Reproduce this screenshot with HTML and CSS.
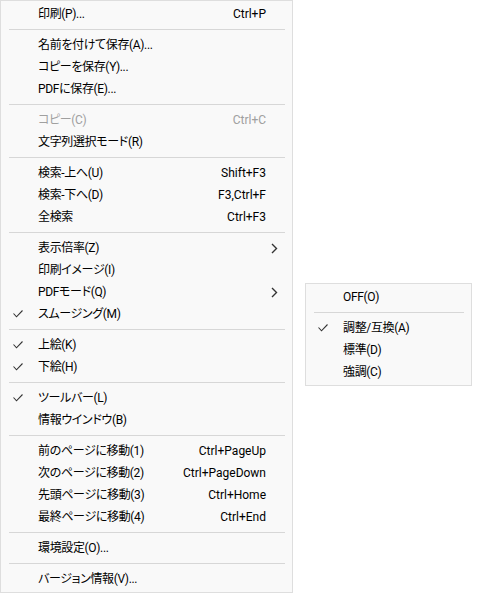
FILE: index.html
```html
<!DOCTYPE html>
<html lang="ja">
<head>
    <meta charset="UTF-8">
    <meta name="viewport" content="width=device-width, initial-scale=1.0">
    <title>メニュー</title>
    <link rel="stylesheet" href="styles.css">
</head>
<body>
    <div class="menu main-menu">
        <div class="item"><span class="check"></span><span class="label">印刷(P)...</span><span class="key">Ctrl+P</span><span class="more"></span></div>
        <div class="sep"></div>
        <div class="item"><span class="check"></span><span class="label">名前を付けて保存(A)...</span><span class="key"></span><span class="more"></span></div>
        <div class="item"><span class="check"></span><span class="label">コピーを保存(Y)...</span><span class="key"></span><span class="more"></span></div>
        <div class="item"><span class="check"></span><span class="label">PDFに保存(E)...</span><span class="key"></span><span class="more"></span></div>
        <div class="sep"></div>
        <div class="item disabled"><span class="check"></span><span class="label">コピー(C)</span><span class="key">Ctrl+C</span><span class="more"></span></div>
        <div class="item"><span class="check"></span><span class="label">文字列選択モード(R)</span><span class="key"></span><span class="more"></span></div>
        <div class="sep"></div>
        <div class="item"><span class="check"></span><span class="label">検索-上へ(U)</span><span class="key">Shift+F3</span><span class="more"></span></div>
        <div class="item"><span class="check"></span><span class="label">検索-下へ(D)</span><span class="key">F3,Ctrl+F</span><span class="more"></span></div>
        <div class="item"><span class="check"></span><span class="label">全検索</span><span class="key">Ctrl+F3</span><span class="more"></span></div>
        <div class="sep"></div>
        <div class="item"><span class="check"></span><span class="label">表示倍率(Z)</span><span class="key"></span><span class="more"><svg width="7" height="11" viewBox="0 0 7 11"><path d="M1 1 L5.5 5.5 L1 10" /></svg></span></div>
        <div class="item"><span class="check"></span><span class="label">印刷イメージ(I)</span><span class="key"></span><span class="more"></span></div>
        <div class="item"><span class="check"></span><span class="label">PDFモード(Q)</span><span class="key"></span><span class="more"><svg width="7" height="11" viewBox="0 0 7 11"><path d="M1 1 L5.5 5.5 L1 10" /></svg></span></div>
        <div class="item"><span class="check"><svg width="10" height="8" viewBox="0 0 10 8"><path d="M0.5 3.5 L3.5 6.8 L9.5 0.5" /></svg></span><span class="label">スムージング(M)</span><span class="key"></span><span class="more"></span></div>
        <div class="sep"></div>
        <div class="item"><span class="check"><svg width="10" height="8" viewBox="0 0 10 8"><path d="M0.5 3.5 L3.5 6.8 L9.5 0.5" /></svg></span><span class="label">上絵(K)</span><span class="key"></span><span class="more"></span></div>
        <div class="item"><span class="check"><svg width="10" height="8" viewBox="0 0 10 8"><path d="M0.5 3.5 L3.5 6.8 L9.5 0.5" /></svg></span><span class="label">下絵(H)</span><span class="key"></span><span class="more"></span></div>
        <div class="sep"></div>
        <div class="item"><span class="check"><svg width="10" height="8" viewBox="0 0 10 8"><path d="M0.5 3.5 L3.5 6.8 L9.5 0.5" /></svg></span><span class="label">ツールバー(L)</span><span class="key"></span><span class="more"></span></div>
        <div class="item"><span class="check"></span><span class="label">情報ウインドウ(B)</span><span class="key"></span><span class="more"></span></div>
        <div class="sep"></div>
        <div class="item"><span class="check"></span><span class="label">前のページに移動(1)</span><span class="key">Ctrl+PageUp</span><span class="more"></span></div>
        <div class="item"><span class="check"></span><span class="label">次のページに移動(2)</span><span class="key">Ctrl+PageDown</span><span class="more"></span></div>
        <div class="item"><span class="check"></span><span class="label">先頭ページに移動(3)</span><span class="key">Ctrl+Home</span><span class="more"></span></div>
        <div class="item"><span class="check"></span><span class="label">最終ページに移動(4)</span><span class="key">Ctrl+End</span><span class="more"></span></div>
        <div class="sep"></div>
        <div class="item"><span class="check"></span><span class="label">環境設定(O)...</span><span class="key"></span><span class="more"></span></div>
        <div class="sep"></div>
        <div class="item"><span class="check"></span><span class="label">バージョン情報(V)...</span><span class="key"></span><span class="more"></span></div>
    </div>

    <!-- PDFモード のサブメニュー -->
    <div class="menu sub-menu">
        <div class="item"><span class="check"></span><span class="label">OFF(O)</span><span class="key"></span><span class="more"></span></div>
        <div class="sep"></div>
        <div class="item"><span class="check"><svg width="10" height="8" viewBox="0 0 10 8"><path d="M0.5 3.5 L3.5 6.8 L9.5 0.5" /></svg></span><span class="label">調整/互換(A)</span><span class="key"></span><span class="more"></span></div>
        <div class="item"><span class="check"></span><span class="label">標準(D)</span><span class="key"></span><span class="more"></span></div>
        <div class="item"><span class="check"></span><span class="label">強調(C)</span><span class="key"></span><span class="more"></span></div>
    </div>
</body>
</html>
```

FILE: styles.css
```css
body {
    margin: 0;
    background-color: #fff;
    font-family: Roboto, "Noto Sans CJK JP", sans-serif;
    font-size: 12px;
    color: #000;
}

.menu {
    background-color: #f9f9f9;
    border: 1px solid #dedede;
    padding: 2px 0;
    box-sizing: border-box;
}

.main-menu {
    width: 293px;
}

/* サブメニューは親メニューの上に重ねて出す */
.sub-menu {
    position: absolute;
    left: 305px;
    top: 283px;
    width: 167px;
}

.item {
    display: grid;
    grid-template-columns: 37px 1fr auto 26px;
    height: 22px;
    line-height: 22px;
    white-space: nowrap;
}

.label {
    font-feature-settings: "palt";
    letter-spacing: -0.35px;
}

.item.disabled {
    color: #a0a0a0;
}

.check {
    display: flex;
    align-items: center;
    padding-left: 12px;
}

.check svg path {
    fill: none;
    stroke: #333;
    stroke-width: 1.1;
}

.more {
    display: flex;
    align-items: center;
    padding-left: 5px;
}

.more svg path {
    fill: none;
    stroke: #333;
    stroke-width: 1.4;
}

.sep {
    height: 9px;
    display: flex;
    align-items: center;
    margin: 0 7px 0 8px;
}

.sep::before {
    content: "";
    flex: 1;
    height: 1px;
    background-color: #d7d7d7;
}
```
